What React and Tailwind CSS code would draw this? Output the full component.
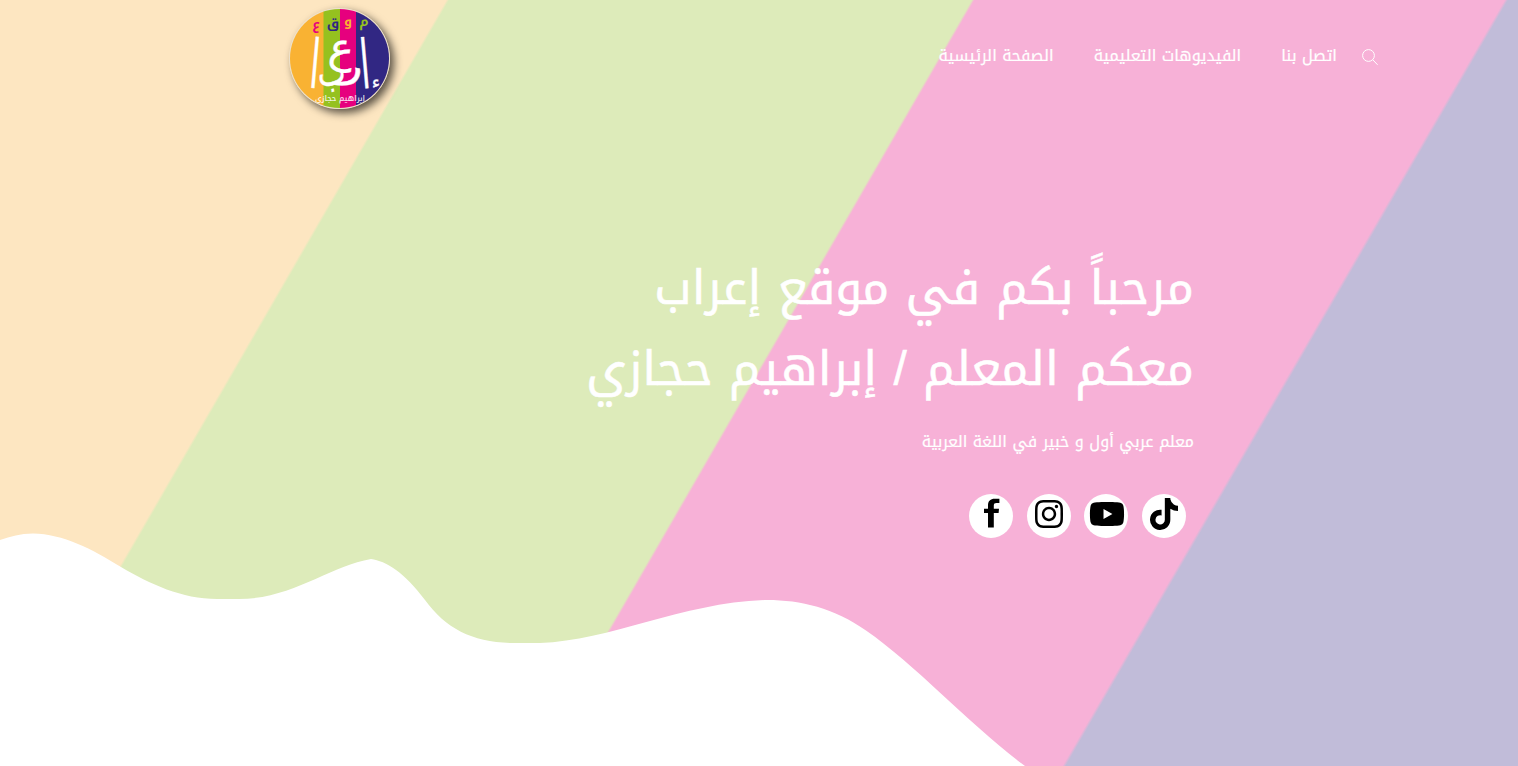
import { FaTiktok, FaYoutube, FaInstagram } from "react-icons/fa6";

const NAV = ["الصفحة الرئيسية", "الفيديوهات التعليمية", "اتصل بنا"];

function FacebookIcon(props) {
  return (
    <svg viewBox="0 0 16 30" fill="currentColor" {...props}>
      <path d="M4 29.500V15H0V10.800H4V7.500C4 2.800 6.600 0.700 10.600 0.700H15.400V5H12.400C10.600 5 9.800 5.800 9.800 7.600V10.800H15L14.600 15H9.800V29.500Z" />
    </svg>
  );
}

const SOCIAL = [
  { name: "facebook", Icon: FacebookIcon, size: "h-[30px] w-4 mt-[4px] ml-[1px]" },
  { name: "instagram", Icon: FaInstagram, size: "size-8 mt-[4px]" },
  { name: "youtube", Icon: FaYoutube, size: "size-9 mt-[2px] ml-[1px]" },
  { name: "tiktok", Icon: FaTiktok, size: "size-8 mt-[4px] mr-[1px]" },
];

function Logo() {
  return (
    <div className="size-[101px] overflow-hidden rounded-full border border-[#e8e0d0] shadow-[4px_4px_8px_rgba(0,0,0,0.65)]">
      <svg width="100" height="100" viewBox="290 9 100 100" className="font-['Noto_Kufi_Arabic','Noto_Sans_Arabic',serif]">
        <rect x="290" y="9" width="34" height="100" fill="#f9b233" />
        <rect x="323.500" y="9" width="17" height="100" fill="#95c11f" />
        <rect x="340" y="9" width="16" height="100" fill="#e6007e" />
        <rect x="356" y="9" width="35" height="100" fill="#312783" />
        <g fontSize="13" fontWeight="700" textAnchor="middle">
          <text x="316" y="29" fill="#e6007e">ع</text>
          <text x="333" y="28" fill="#312783">ق</text>
          <text x="348" y="26" fill="#f9b233">و</text>
          <text x="364" y="26" fill="#95c11f">م</text>
        </g>
        <g fill="#fff" stroke="#fff" strokeWidth="0.300" textAnchor="middle" className="font-['DejaVu_Sans']">
          <text fontSize="42" transform="translate(340 62) rotate(8)">ع</text>
          <text fontSize="34" transform="translate(350 78) rotate(12) scale(1.400 1.200)">ر</text>
          <text fontSize="30" transform="translate(333 85) rotate(-8) scale(1 1.300)">ب</text>
          <text fontSize="32" transform="translate(367 88) rotate(-5) scale(1 2.100)">ا</text>
          <text fontSize="32" transform="translate(313 88) rotate(5) scale(1 2.100)">ا</text>
          <text fontSize="18" x="376" y="88">ء</text>
        </g>
        <text x="340" y="101" fontSize="7.500" fontWeight="600" fill="#fff" fillOpacity="0.850" textAnchor="middle" direction="rtl" textLength="50" lengthAdjust="spacingAndGlyphs">إبراهيم حجازي</text>
      </svg>
    </div>
  );
}

export default function App() {
  return (
    <div className="relative h-[766px] w-[1518px] overflow-hidden bg-[linear-gradient(120deg,#fde6c1_386.5px,#ddebba_389px,#ddebba_841.5px,#f7b1d7_844px,#f7b1d7_1303px,#c1bcd9_1306px)] font-['Noto_Kufi_Arabic','Noto_Sans_Arabic','Droid_Arabic_Kufi',serif] text-white">
      <svg className="absolute inset-0" width="1518" height="766" viewBox="0 0 1518 766">
        <path
          fill="#fff"
          d="M0 540C11 536.500 20 533.500 33 533.500C63 534 92 549 121 567C150 584 182 599 217 599H239C292 599 330 566 371 559C386 561 404 572 425 600C446 629 474 643 514 643H540C610 641 684 602 767 600C801 600 834 608 866 630.500C917 666 971 726 1025 766H0Z"
        />
      </svg>
      <header className="relative flex h-[120px] items-start justify-between pr-[140px] pl-[289px]">
        <div className="pt-2">
          <Logo />
        </div>
        <nav dir="ltr" className="flex items-center pt-10 text-[16px] leading-8 [-webkit-text-stroke:0.2px_white]">
          {NAV.map((label) => (
            <a key={label} dir="rtl" className="mr-10 whitespace-nowrap last-of-type:mr-[25px]">
              {label}
            </a>
          ))}
          <svg className="mt-px size-4" viewBox="0 0 16 16" fill="none" stroke="currentColor">
            <circle cx="6.500" cy="6.500" r="5.900" />
            <path d="M10.700 10.700L15.600 15.800" />
          </svg>
        </nav>
      </header>
      <main dir="rtl" className="relative flex flex-col items-start pt-[128px] pr-[324px]">
        <h1 className="whitespace-nowrap text-[48px] leading-[81px] [-webkit-text-stroke:0.5px_white]">
          مرحباً بكم في موقع إعراب
          <br />
          معكم المعلم <span className="font-['Liberation_Sans'] leading-none">/</span> إبراهيم حجازي
        </h1>
        <p className="mt-[16px] whitespace-nowrap text-[16px] leading-8 [-webkit-text-stroke:0.2px_white]">معلم عربي أول و خبير في اللغة العربية</p>
        <div dir="ltr" className="mt-[36px] mr-[8px] flex gap-[13.67px] text-black">
          {SOCIAL.map(({ name, Icon, size }) => (
            <a key={name} className="flex size-11 items-start justify-center rounded-full bg-white">
              <Icon className={size} />
            </a>
          ))}
        </div>
      </main>
    </div>
  );
}
